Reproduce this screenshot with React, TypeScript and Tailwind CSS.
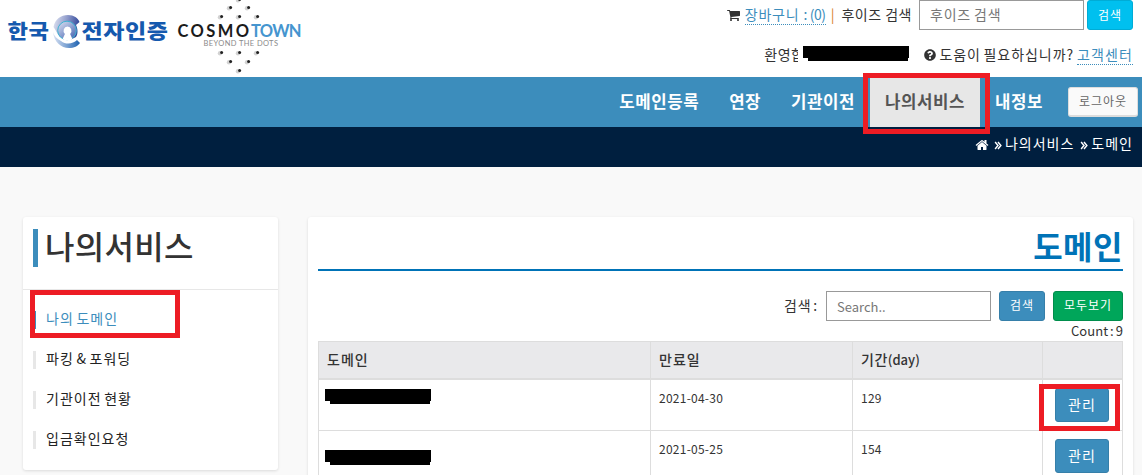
import React, { useState } from 'react';
import { FaQuestionCircle } from 'react-icons/fa';

interface Domain {
  id: number;
  expires: string;
  days: number;
  maskClass: string;
}

const menuItems = ['도메인등록', '연장', '기관이전', '나의서비스', '내정보'];

const sideItems = ['나의 도메인', '파킹 & 포워딩', '기관이전 현황', '입금확인요청'];

const domains: Domain[] = [
  { id: 1, expires: '2021-04-30', days: 129, maskClass: 'mt-[9px]' },
  { id: 2, expires: '2021-05-25', days: 154, maskClass: 'mt-[19px]' },
];

const dots = [
  [239, 0], [230, 8], [248, 8], [221, 17], [239, 17], [257, 17],
  [221, 53], [239, 53], [257, 53], [230, 62], [248, 62], [239, 71],
];

function CartIcon({ className = '' }: { className?: string }) {
  return (
    <svg viewBox="0 0 1664 1792" fill="currentColor" className={className}>
      <path d="M640 1536q0 52-38 90t-90 38-90-38-38-90 38-90 90-38 90 38 38 90zm896 0q0 52-38 90t-90 38-90-38-38-90 38-90 90-38 90 38 38 90zm128-1088v512q0 24-16.5 42.5t-40.5 21.5l-1044 122q13 60 13 70 0 16-24 64h920q26 0 45 19t19 45-19 45-45 19h-1024q-26 0-45-19t-19-45q0-11 8-31.5t16-36 21.5-40 15.5-29.5l-177-823h-204q-26 0-45-19t-19-45 19-45 45-19h256q16 0 28.5 6.5t19.5 15.5 13 24.5 8 26 5.5 29.5 4.5 26h1201q26 0 45 19t19 45z" />
    </svg>
  );
}

function HomeIcon({ className = '' }: { className?: string }) {
  return (
    <svg viewBox="0 0 1792 1792" fill="currentColor" className={className}>
      <path d="M1472 992v480q0 26-19 45t-45 19h-384v-384h-256v384h-384q-26 0-45-19t-19-45v-480q0-1 .5-3t.5-3l575-474 575 474q1 2 1 6zm223-69l-62 74q-8 9-21 11h-3q-13 0-21-7l-692-577-692 577q-12 8-24 7-13-2-21-11l-62-74q-8-10-7-23.5t11-21.5l719-599q32-26 76-26t76 26l244 204v-195q0-14 9-23t23-9h192q14 0 23 9t9 23v408l219 182q10 8 11 21.5t-7 23.5z" />
    </svg>
  );
}

function DoubleAngleIcon({ className = '' }: { className?: string }) {
  return (
    <svg viewBox="0 0 8 10" fill="none" stroke="currentColor" strokeWidth="1.6" className={className}>
      <path d="M0.8 1.2 L4 5 L0.8 8.8 M4 1.2 L7.2 5 L4 8.8" />
    </svg>
  );
}

function Logo() {
  return (
    <svg width="310" height="77" viewBox="0 0 310 77" className="shrink-0">
      <defs>
        <linearGradient id="ring" x1="0" y1="0.2" x2="1" y2="0.4">
          <stop offset="0" stopColor="#dde2f1" />
          <stop offset="0.5" stopColor="#8e9aca" />
          <stop offset="1" stopColor="#2b4398" />
        </linearGradient>
        <linearGradient id="inner" x1="0" y1="0" x2="0.8" y2="1">
          <stop offset="0" stopColor="#dfe4f3" />
          <stop offset="1" stopColor="#4a68b4" />
        </linearGradient>
        <linearGradient id="ringLow" x1="0" y1="0" x2="1" y2="0">
          <stop offset="0" stopColor="#dbe3f4" />
          <stop offset="1" stopColor="#1c61b0" />
        </linearGradient>
      </defs>
      <g fill="#1559ae" fontFamily='"Noto Sans CJK KR", sans-serif' fontWeight="900" fontSize="20">
        <text x="7.5" y="38.5" textLength="42" lengthAdjust="spacingAndGlyphs">한국</text>
        <text x="81.5" y="38.5" textLength="87" lengthAdjust="spacingAndGlyphs">전자인증</text>
      </g>
      <path d="M53.5 27 C55 19 61 15 68 15 C74 15 78 18 79.5 22 L76 25 C78 29 78 34 76 37 L70 40 L60 37 C57 34 56 30 53.5 27 Z" fill="url(#ring)" />
      <path d="M53 32 C54 42 61 48 69 48 C74 48 78 46 80 43 L77 40 C73 44 66 45 61 41 C57 39 54 36 53 32 Z" fill="url(#ringLow)" />
      <circle cx="67" cy="30.5" r="9.3" fill="url(#inner)" stroke="#3fb3d2" strokeWidth="1" />
      <path d="M67.5 26.5 a4.3 4.3 0 0 1 2.6 7.4 l2.3 5 c-3 2 -7 2 -9.8 0 l2.3 -5 a4.3 4.3 0 0 1 2.6 -7.4 Z" fill="#fff" />

      {dots.map(([x, y]) => (
        <g key={`${x}-${y}`}>
          <circle cx={x - 1} cy={y + 0.3} r="2.2" fill="#d2d2d2" />
          <circle cx={x + 0.6} cy={y - 0.5} r="1.5" fill="#222" />
        </g>
      ))}
      <g fontFamily='"Lato", sans-serif' fontWeight="700" fontSize="16.5">
        <text x="177.5" y="36.5" fill="#1b1b1b" textLength="72">COSMO</text>
        <text x="251" y="36.5" fill="#4595cf" textLength="51">TOWN</text>
      </g>
      <text x="203.5" y="45.5" fill="#8a8a8a" fontFamily='"Lato", sans-serif' fontSize="7.5" textLength="75">BEYOND THE DOTS</text>
    </svg>
  );
}

function Mask({ className = '' }: { className?: string }) {
  return (
    <div className={`w-[106px] ${className}`}>
      <div className="h-3 bg-black" />
      <div className="ml-[5px] mr-px h-[3px] bg-black" />
    </div>
  );
}

function TopBar() {
  const [keyword, setKeyword] = useState('');

  return (
    <header className="flex h-[77px] justify-between bg-white">
      <Logo />
      <div className="flex flex-col items-end pr-[9px]">
        <div className="flex h-[30px] items-center">
          <CartIcon className="mr-[5px] h-[14px] w-[13px]" />
          <a href="#" className="-mt-px border-b border-dotted border-[#3c8dbc] leading-5 tracking-[0.8px] text-[#3c8dbc]">
            장바구니 <span className="tracking-[-0.4px]">: (0)</span>
          </a>
          <span className="ml-[5px] mr-[7px] -mt-[2px] tracking-normal text-[#d9822b]">|</span>
          <span className="-mt-[2px]">후이즈 검색</span>
          <input
            value={keyword}
            onChange={(e) => setKeyword(e.target.value)}
            placeholder="후이즈 검색"
            className="ml-[7px] h-[30px] w-[165px] border border-[#999] px-[10px] pb-[3px] text-[14px] tracking-[0.8px] [word-spacing:-1px] placeholder:text-[#777]"
          />
          <button className="ml-[3px] h-[30px] w-[46px] rounded-[3px] border border-[#00acd6] bg-[#00c0ef] pb-px text-[12px] tracking-[1px] text-white">
            검색
          </button>
        </div>
        <div className="mt-[13px] flex h-[22px] items-center">
          <div className="relative mr-[105px] whitespace-nowrap">
            환영합
            <div className="absolute right-[-105px] top-0 h-[18px] bg-white pl-[5px] pt-[2px]">
              <Mask />
            </div>
          </div>
          <FaQuestionCircle className="ml-[15px] mr-[3px] mt-px h-3 w-3" />
          <span className="tracking-[0.95px] [word-spacing:-1.5px]">도움이 필요하십니까?</span>
          <a href="#" className="ml-[3px] border-b border-dotted border-[#3c8dbc] leading-5 tracking-[1.1px] text-[#3c8dbc]">고객센터</a>
        </div>
      </div>
    </header>
  );
}

function NavBar() {
  return (
    <nav className="relative flex h-[50px] justify-end bg-[#3c8dbc] pr-1">
      {menuItems.map((item) => (
        <a
          key={item}
          href="#"
          className={`px-[15px] text-[16.8px] font-bold leading-[48px] tracking-[0.55px] ${
            item === '나의서비스' ? 'bg-[#e7e7e7] text-[#555]' : 'text-white'
          }`}
        >
          {item}
        </a>
      ))}
      <button className="ml-[10px] mt-[10px] h-[30px] w-[70px] rounded-[3px] border border-b-2 border-[#ddd] bg-[#fafafa] pb-px text-[12px] tracking-[0.9px] text-[#666]">
        로그아웃
      </button>
      <div className="pointer-events-none absolute -top-1 left-[863px] h-[61px] w-[127px] border-[5px] border-[#ed1c24]" />
    </nav>
  );
}

function Breadcrumb() {
  return (
    <div className="flex h-10 items-center justify-end bg-[#001f3f] pb-[7px] pr-[9px] text-white">
      <HomeIcon className="mr-[5px] mt-[2px] h-[14px] w-[14px]" />
      <DoubleAngleIcon className="mr-[3px] mt-[3px] h-[9px] w-2" />
      <span className="tracking-[1px]">나의서비스</span>
      <DoubleAngleIcon className="ml-[6px] mr-[3px] mt-[3px] h-[9px] w-2" />
      <span className="tracking-[1px]">도메인</span>
    </div>
  );
}

function Sidebar() {
  return (
    <aside className="relative h-[253px] w-[255px] shrink-0 rounded-[3px] bg-white shadow-[0_1px_3px_rgba(0,0,0,0.12)]">
      <div className="h-[73px] border-b border-[#e7e7e7] pl-[10px] pt-3">
        <h2 className="h-[38px] border-l-[5px] border-[#3c8dbc] pl-[7px] text-[32px] font-medium leading-[33px] tracking-[0.3px]">나의서비스</h2>
      </div>
      <ul className="pl-[10px] pt-[21px]">
        {sideItems.map((item, index) => (
          <li key={item} className="flex h-10 items-start">
            <a
              href="#"
              className={`h-[18px] border-l-[3px] pl-[10px] leading-[15px] tracking-[1px] [word-spacing:-1.5px] ${
                index === 0 ? 'border-[#3c8dbc] text-[#3c8dbc]' : 'border-[#e7e7e7] text-[#222]'
              }`}
            >
              {item}
            </a>
          </li>
        ))}
      </ul>
      <div className="pointer-events-none absolute left-[7px] top-[73px] h-12 w-[150px] border-[5px] border-[#ed1c24]" />
    </aside>
  );
}

function DomainTable() {
  return (
    <table className="w-[805px] table-fixed border-separate border-spacing-0 border-l border-t border-[#ddd] text-left">
      <thead>
        <tr className="h-[38px] bg-[#e9e9eb]">
          <th className="w-[332px] border-b-2 border-r border-[#ddd] px-2 pt-0 pb-[2px] font-medium tracking-[1px]">도메인</th>
          <th className="w-[202px] border-b-2 border-r border-[#ddd] px-2 pt-0 pb-[2px] font-medium tracking-[1px]">만료일</th>
          <th className="w-[190px] border-b-2 border-r border-[#ddd] px-2 pt-0 pb-[2px] font-medium">
            기간<span className="text-[13px] tracking-normal">(day)</span>
          </th>
          <th className="w-[80px] border-b-2 border-r border-[#ddd] p-0" />
        </tr>
      </thead>
      <tbody className="text-[12px] tracking-[0.25px]">
        {domains.map((domain) => (
          <tr key={domain.id} className="h-[51px] align-top">
            <td className="border-b border-r border-[#ddd] py-0 pl-[6px]">
              <Mask className={domain.maskClass} />
            </td>
            <td className="border-b border-r border-[#ddd] px-2 pt-2 pb-0 leading-5">{domain.expires}</td>
            <td className="border-b border-r border-[#ddd] px-2 pt-2 pb-0 leading-5">{domain.days}</td>
            <td className="border-b border-r border-[#ddd] py-0 pl-3 pt-2">
              <button className="block h-[34px] w-[54px] rounded-[3px] border border-[#367fa9] bg-[#3c8dbc] pb-[2px] text-[14px] tracking-[1px] text-white">
                관리
              </button>
            </td>
          </tr>
        ))}
      </tbody>
    </table>
  );
}

function DomainPanel() {
  const [search, setSearch] = useState('');

  return (
    <main className="relative h-[300px] w-[825px] shrink-0 rounded-[3px] bg-white px-[10px] shadow-[0_1px_3px_rgba(0,0,0,0.12)]">
      <h1 className="h-[54px] border-b-2 border-[#0073b7] pt-2 text-right text-[32px] font-bold leading-10 text-[#0073b7]">
        도메인
      </h1>
      <div className="mt-5 flex h-[30px] items-center justify-end">
        <span className="-mt-[2px] tracking-[0.8px] [word-spacing:-2px]">검색 :</span>
        <input
          value={search}
          onChange={(e) => setSearch(e.target.value)}
          placeholder="Search.."
          className="ml-2 h-[30px] w-[165px] border border-[#999] px-[10px] text-[13px] tracking-normal placeholder:text-[#777]"
        />
        <button className="ml-2 h-[30px] w-[46px] rounded-[3px] border border-[#367fa9] bg-[#3c8dbc] pb-[2px] text-[12px] tracking-[0.9px] text-white">
          검색
        </button>
        <button className="ml-2 h-[30px] w-[70px] rounded-[3px] border border-[#008d4c] bg-[#00a65a] pb-[2px] text-[12px] tracking-[0.9px] text-white">
          모두보기
        </button>
      </div>
      <p className="h-5 text-right text-[13px] leading-5 tracking-[0.05px] [word-spacing:-1px]">Count : 9</p>
      <DomainTable />
      <div className="pointer-events-none absolute left-[731px] top-[167px] h-[47px] w-[81px] border-[5px] border-[#ed1c24]" />
    </main>
  );
}

export default function App() {
  return (
    <div className="h-[475px] w-[1142px] overflow-hidden bg-[#f9f9f9] font-['Noto_Sans_CJK_KR',sans-serif] text-[14px] tracking-[0.5px] text-[#333]">
      <TopBar />
      <NavBar />
      <Breadcrumb />
      <div className="flex items-start gap-[30px] pl-[23px] pt-[50px]">
        <Sidebar />
        <DomainPanel />
      </div>
    </div>
  );
}
